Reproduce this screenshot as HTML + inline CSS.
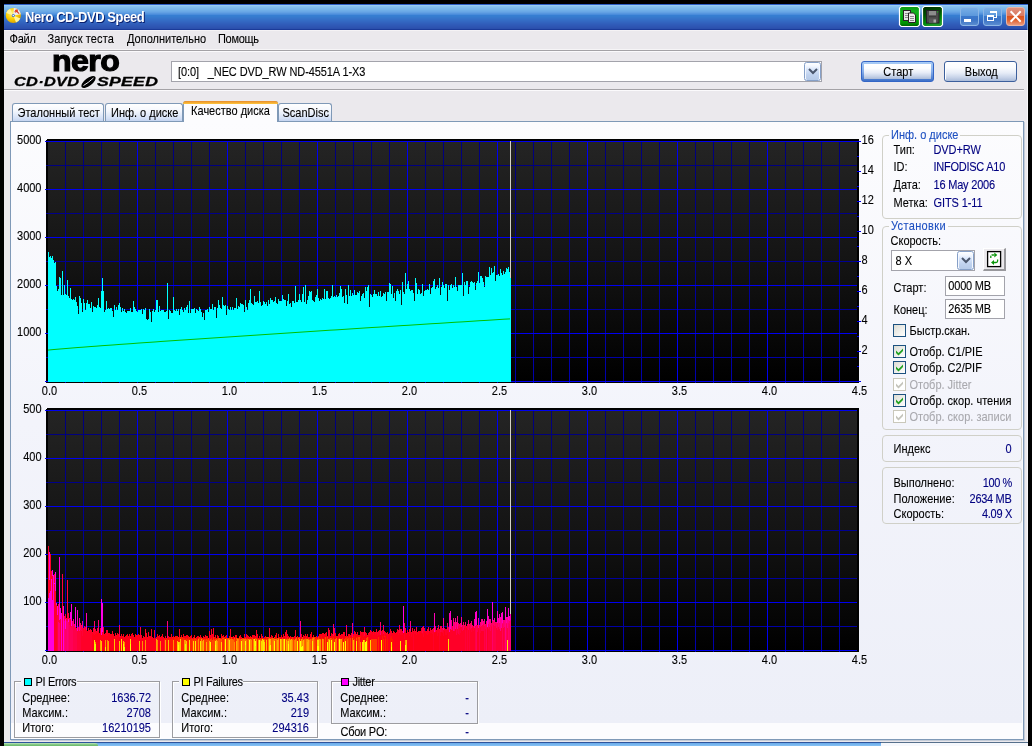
<!DOCTYPE html>
<html lang="ru"><head><meta charset="utf-8"><title>Nero CD-DVD Speed</title>
<style>
html,body{margin:0;padding:0;background:#000;overflow:hidden;}
body{width:1032px;height:746px;overflow:hidden;position:relative;font-family:"Liberation Sans", sans-serif;font-size:11px;}
div,span.t,svg{position:absolute;box-sizing:border-box;}
span.t{white-space:pre;}
.gb{border:1px solid #d0d0c8;border-radius:4px;}
.fr{border:1px solid #9c9ca0;box-shadow:1px 1px 0 #fff, inset 1px 1px 0 #fff;}
.cb{width:13px;height:13px;border:1px solid #1c5180;background:linear-gradient(135deg,#dcdcd4,#fff);}
.cbd{width:13px;height:13px;border:1px solid #cac8bb;background:#fff;}
</style></head><body>
<div id="app" style="left:0;top:0;width:1032px;height:746px;overflow:hidden;will-change:transform;">
<div style="left:4px;top:4px;width:1024px;height:738px;background:#ebe9ed;"></div>
<div style="left:4px;top:4px;width:1024px;height:26px;background:linear-gradient(to bottom,#2c5ec6 0px,#2c5ec6 1px,#98ccf3 1px,#98ccf3 2px,#86c2ef 2px,#86c2ef 3px,#80bdee 3px,#80bdee 4px,#7ab8ec 4px,#7ab8ec 5px,#76b4ea 5px,#76b4ea 6px,#70aee8 6px,#70aee8 7px,#6aa8e6 7px,#6aa8e6 8px,#62a0e3 8px,#62a0e3 9px,#5696df 9px,#5696df 10px,#4a8cdb 10px,#4a8cdb 11px,#367ed2 11px,#367ed2 12px,#367ccf 12px,#367ccf 13px,#3678cd 13px,#3678cd 14px,#3674ca 14px,#3674ca 15px,#3570c8 15px,#3570c8 16px,#346cc5 16px,#346cc5 17px,#3368c2 17px,#3368c2 18px,#3264bf 18px,#3264bf 19px,#3160bc 19px,#3160bc 20px,#305cb9 20px,#305cb9 21px,#2f59b6 21px,#2f59b6 22px,#2e56b3 22px,#2e56b3 23px,#2d53b0 23px,#2d53b0 24px,#2a4fac 24px,#2a4fac 25px,#1b3b99 25px,#1b3b99 26px);"></div>
<div style="left:4px;top:30px;width:1024px;height:1px;background:#f5f3f5;"></div>
<div style="left:1027px;top:5px;width:1px;height:25px;background:rgba(150,200,245,.55);"></div>
<div style="left:1027px;top:31px;width:1px;height:711px;background:#f8f7f9;"></div>
<svg style="left:5px;top:7px" width="17" height="17" viewBox="0 0 17 17">
<defs><radialGradient id="cdg" cx="40%" cy="35%" r="70%"><stop offset="0" stop-color="#fff27a"/><stop offset=".55" stop-color="#fbd000"/><stop offset="1" stop-color="#d89a00"/></radialGradient></defs>
<circle cx="8.3" cy="8.5" r="7.6" fill="url(#cdg)"/>
<path d="M8.3 8.5 L1.2 6 A7.6 7.6 0 0 1 5 1.7 Z" fill="#fff59a"/>
<path d="M8.3 8.5 L11 15.6 A7.6 7.6 0 0 0 15.3 11.5 Z" fill="#fff59a"/>
<path d="M8.3 8.5 L8.8 0.9 A7.6 7.6 0 0 1 15.8 7.2 Z" fill="#ececec"/>
<path d="M10.2 3 L14.2 6.6 M11.8 2.2 L12.6 4.6 M9.6 4.6 l1.6 .6" stroke="#e03a20" stroke-width="1.1" fill="none"/>
<circle cx="8.3" cy="8.5" r="1.5" fill="#3c6cc8"/>
<circle cx="8.3" cy="8.5" r=".8" fill="#fff"/>
</svg>
<span class="t" style="top:10.50px;color:#fff;font-size:13px;line-height:14px;font-weight:bold;letter-spacing:-0.42px;left:25px;transform:scaleY(1.07);transform-origin:0 11.50px;text-shadow:1px 1px 0 #0a1f6e;">Nero CD-DVD Speed</span>
<svg style="left:898px;top:5px" width="23" height="23" viewBox="0 0 23 23">
<defs><linearGradient id="g1" x1="0" y1="0" x2="0" y2="1"><stop offset="0" stop-color="#0a9a14"/><stop offset=".25" stop-color="#10b01c"/><stop offset=".6" stop-color="#00a808"/><stop offset=".85" stop-color="#009000"/><stop offset="1" stop-color="#005c00"/></linearGradient></defs>
<path d="M3.200 1.500h16.600l1.700 1.700v16.600l-1.700 1.700h-16.600l-1.700-1.700v-16.600z" fill="url(#g1)" stroke="#fff" stroke-width="1.200"/>
<rect x="5.500" y="5.500" width="7" height="10" fill="#e4e4e4" stroke="#2a2226" stroke-width="1"/>
<path d="M7 8.500h4M7 10.500h4M7 12.500h4" stroke="#8a8a8a" stroke-width="1"/>
<path d="M10.500 8h5l2 2v7.500h-7z" fill="#ececec" stroke="#2a2226" stroke-width="1"/>
<path d="M12 11.500h4M12 13.500h4M12 15.500h4" stroke="#8a8a8a" stroke-width="1"/>
</svg>
<svg style="left:921px;top:5px" width="23" height="23" viewBox="0 0 23 23">
<defs><linearGradient id="g2" x1="0" y1="0" x2="0.300" y2="1"><stop offset="0" stop-color="#002c00"/><stop offset=".45" stop-color="#005200"/><stop offset=".8" stop-color="#008a08"/><stop offset="1" stop-color="#1c9a28"/></linearGradient></defs>
<path d="M3.200 1.500h16.600l1.700 1.700v16.600l-1.700 1.700h-16.600l-1.700-1.700v-16.600z" fill="url(#g2)" stroke="#fff" stroke-width="1.200"/>
<rect x="5.500" y="5.500" width="12.500" height="12.500" fill="#4a4a4a" stroke="#262226" stroke-width="1"/>
<rect x="8" y="6" width="7" height="5" fill="#8c8c8c"/>
<rect x="8" y="10.500" width="7" height="1" fill="#2c2c2c"/>
<rect x="8" y="13.500" width="7.500" height="4.500" fill="#5a5a5a"/>
<rect x="12.500" y="14.500" width="2.500" height="3" fill="#a8a8a8"/>
<rect x="16" y="6.300" width="1.200" height="1.200" fill="#18b018"/>
</svg>
<div style="left:960px;top:7px;width:19px;height:19px;border-radius:3px;border:1px solid #8cb6e6;background:linear-gradient(to bottom,#78aee6 0,#5c98dc 45%,#3a78cc 46%,#3c74c6 70%,#5a8cd0 100%);"></div>
<div style="left:983px;top:7px;width:19px;height:19px;border-radius:3px;border:1px solid #8cb6e6;background:linear-gradient(to bottom,#78aee6 0,#5c98dc 45%,#3a78cc 46%,#3c74c6 70%,#5a8cd0 100%);"></div>
<div style="left:1006px;top:7px;width:19px;height:19px;border-radius:3px;border:1px solid #eab4a4;background:linear-gradient(to bottom,#e0907c 0,#d97a62 45%,#d9521e 46%,#e0602c 70%,#e89a80 100%);"></div>
<svg style="left:960px;top:7px" width="66" height="19" viewBox="0 0 66 19" shape-rendering="crispEdges">
<rect x="4" y="12" width="7" height="3" fill="#fff"/>
<rect x="30" y="4" width="7" height="2" fill="#fff"/>
<rect x="36" y="4" width="1" height="7" fill="#fff"/>
<rect x="34" y="10" width="3" height="1" fill="#fff"/>
<rect x="27" y="8" width="7" height="2" fill="#fff"/>
<rect x="27" y="8" width="1" height="6" fill="#fff"/>
<rect x="33" y="8" width="1" height="6" fill="#fff"/>
<rect x="27" y="13" width="7" height="1" fill="#fff"/>
</svg>
<svg style="left:1006px;top:7px" width="19" height="19" viewBox="0 0 19 19">
<path d="M5.300 5 L14 14 M14 5 L5.300 14" stroke="#fff" stroke-width="2" stroke-linecap="square"/>
</svg>
<span class="t" style="top:32.19px;color:#000;font-size:11px;line-height:14px;letter-spacing:-0.2px;left:9.5px;transform:scaleY(1.1);transform-origin:0 10.81px;-webkit-text-stroke:0.1px #000;">Файл</span>
<span class="t" style="top:32.19px;color:#000;font-size:11px;line-height:14px;letter-spacing:0.12px;left:47.5px;transform:scaleY(1.1);transform-origin:0 10.81px;-webkit-text-stroke:0.1px #000;">Запуск теста</span>
<span class="t" style="top:32.19px;color:#000;font-size:11px;line-height:14px;left:127px;transform:scaleY(1.1);transform-origin:0 10.81px;-webkit-text-stroke:0.1px #000;">Дополнительно</span>
<span class="t" style="top:32.19px;color:#000;font-size:11px;line-height:14px;letter-spacing:-0.3px;left:218px;transform:scaleY(1.1);transform-origin:0 10.81px;-webkit-text-stroke:0.1px #000;">Помощь</span>
<div style="left:4px;top:49px;width:1020px;height:1px;background:#f6f5f7;"></div>
<div style="left:4px;top:50px;width:1020px;height:1px;background:#a4a2a6;"></div>
<div style="left:4px;top:51px;width:1020px;height:1px;background:#fbfafc;"></div>
<div style="left:4px;top:89px;width:1020px;height:1px;background:#a4a2a6;"></div>
<div style="left:4px;top:90px;width:1020px;height:1px;background:#fbfafc;"></div>
<span class="t" style="left:52px;top:45px;font-size:28px;line-height:32px;font-weight:bold;letter-spacing:-0.5px;color:#000;-webkit-text-stroke:1.1px #000;transform-origin:0 0;transform:scale(1.145,1.05);">nero</span>
<span class="t" style="left:14px;top:75.3px;font-size:12.5px;line-height:14px;font-weight:bold;font-style:italic;letter-spacing:0.2px;color:#000;-webkit-text-stroke:0.3px #000;transform-origin:0 0;transform:scale(1.31,1.02);">CD·DVD</span>
<span class="t" style="left:96.5px;top:75.3px;font-size:12.5px;line-height:14px;font-weight:bold;font-style:italic;letter-spacing:0.2px;color:#000;-webkit-text-stroke:0.3px #000;transform-origin:0 0;transform:scale(1.41,1.02);">SPEED</span>
<svg style="left:80px;top:74px" width="18" height="16" viewBox="0 0 18 16">
<ellipse cx="8.500" cy="8" rx="8.500" ry="3.800" transform="rotate(-38 8.500 8)" fill="#000"/>
<path d="M3.500 11.500 Q8 9 13.500 4" stroke="#ebe9ed" stroke-width="1" fill="none"/>
</svg>
<div style="left:171px;top:61px;width:651px;height:21px;background:#fff;border:1px solid #a3a3ab;"></div>
<span class="t" style="top:65.19px;color:#000;font-size:11px;line-height:14px;letter-spacing:-0.1px;left:178px;transform:scaleY(1.1);transform-origin:0 10.81px;-webkit-text-stroke:0.1px #000;">[0:0]   _NEC DVD_RW ND-4551A 1-X3</span>
<div style="left:804px;top:62px;width:17px;height:19px;border:1px solid #86a0c8;border-radius:2.5px;background:linear-gradient(to bottom,#ffffff 0,#f4f8ff 18%,#d6e4fa 40%,#c0d2ee 70%,#b6cae8 100%);box-shadow:inset 1px 0 0 #f4f8ff, inset -1px 0 0 #f4f8ff;"></div>
<svg style="left:804px;top:62px" width="17" height="19" viewBox="0 0 17 19"><path d="M5.0 7.0 L9.0 11.0 L13.0 7.0" stroke="#4a566c" stroke-width="2" fill="none"/></svg>
<div style="left:861px;top:61px;width:73px;height:21px;border:1px solid #3466c6;border-radius:3px;background:linear-gradient(to bottom,#a8ccf6 0,#86aeea 50%,#3e70c8 100%);"></div>
<div style="left:864px;top:64px;width:67px;height:15px;background:linear-gradient(to bottom,#ffffff 0,#fbfcfe 30%,#e6ecf7 58%,#c6d2e8 82%,#aabbd8 100%);"></div>
<span class="t" style="top:65.19px;color:#000;font-size:11px;line-height:14px;left:798.3px;width:200px;text-align:center;transform:scaleY(1.1);transform-origin:0 10.81px;-webkit-text-stroke:0.1px #000;">Старт</span>
<div style="left:944px;top:61px;width:73px;height:21px;border:1px solid #3c5f9c;border-radius:3px;background:linear-gradient(to bottom,#ffffff 0,#fbfcfe 30%,#e6ecf7 58%,#c6d2e8 82%,#aabbd8 100%);box-shadow:inset 1px 1px 0 #fff;"></div>
<span class="t" style="top:65.19px;color:#000;font-size:11px;line-height:14px;left:881.3px;width:200px;text-align:center;transform:scaleY(1.1);transform-origin:0 10.81px;-webkit-text-stroke:0.1px #000;">Выход</span>
<div style="left:10px;top:121px;width:1014px;height:619px;background:#fcfcfe;border:1px solid #7f99b7;"></div>
<div style="left:11px;top:122px;width:1011px;height:601px;background:linear-gradient(to bottom,#fcfcfe 0,#f3f4fb 50%,#edeff8 100%);"></div>
<div style="left:12px;top:103px;width:92px;height:18px;border:1px solid #7f99b7;border-bottom:none;border-radius:3px 3px 0 0;background:linear-gradient(to bottom,#ffffff 0,#f4f7fd 40%,#d4e0f6 85%,#c4d4f0 100%);"></div>
<span class="t" style="top:105.69px;color:#000;font-size:11px;line-height:14px;left:-41.3px;width:200px;text-align:center;transform:scaleY(1.1);transform-origin:0 10.81px;-webkit-text-stroke:0.1px #000;">Эталонный тест</span>
<div style="left:105px;top:103px;width:78px;height:18px;border:1px solid #7f99b7;border-bottom:none;border-radius:3px 3px 0 0;background:linear-gradient(to bottom,#ffffff 0,#f4f7fd 40%,#d4e0f6 85%,#c4d4f0 100%);"></div>
<span class="t" style="top:105.69px;color:#000;font-size:11px;line-height:14px;left:44.69999999999999px;width:200px;text-align:center;transform:scaleY(1.1);transform-origin:0 10.81px;-webkit-text-stroke:0.1px #000;">Инф. о диске</span>
<div style="left:278px;top:103px;width:54px;height:18px;border:1px solid #7f99b7;border-bottom:none;border-radius:3px 3px 0 0;background:linear-gradient(to bottom,#ffffff 0,#f4f7fd 40%,#d4e0f6 85%,#c4d4f0 100%);"></div>
<span class="t" style="top:105.69px;color:#000;font-size:11px;line-height:14px;left:205.7px;width:200px;text-align:center;transform:scaleY(1.1);transform-origin:0 10.81px;-webkit-text-stroke:0.1px #000;">ScanDisc</span>
<div style="left:183px;top:101px;width:95px;height:21px;border:1px solid #7f99b7;border-bottom:none;border-radius:3px 3px 0 0;background:#fcfcfe;"></div>
<div style="left:183px;top:101px;width:95px;height:3px;border-radius:3px 3px 0 0;background:linear-gradient(to bottom,#e68b2c,#ffc73c);"></div>
<span class="t" style="top:103.69px;color:#000;font-size:11px;line-height:14px;left:130.5px;width:200px;text-align:center;transform:scaleY(1.1);transform-origin:0 10.81px;-webkit-text-stroke:0.1px #000;">Качество диска</span>
<svg style="left:40px;top:135px" width="830" height="256" viewBox="40 135 830 256" shape-rendering="crispEdges"><defs><linearGradient id="cg139" x1="0" y1="0" x2="0" y2="1"><stop offset="0" stop-color="#242424"/><stop offset=".5" stop-color="#141414"/><stop offset="1" stop-color="#000"/></linearGradient></defs><rect x="46" y="139" width="813" height="244" fill="#000"/><rect x="46" y="139" width="1" height="1" fill="#fcfcfe"/><rect x="48" y="141" width="809" height="241" fill="url(#cg139)"/><linearGradient id="cg139m" gradientUnits="userSpaceOnUse" x1="0" y1="141" x2="0" y2="382"><stop offset="0" stop-color="#00007c"/><stop offset="1" stop-color="#0000ac"/></linearGradient><g fill="url(#cg139m)"><rect x="65" y="141" width="1" height="241"/><rect x="83" y="141" width="1" height="241"/><rect x="101" y="141" width="1" height="241"/><rect x="119" y="141" width="1" height="241"/><rect x="155" y="141" width="1" height="241"/><rect x="173" y="141" width="1" height="241"/><rect x="191" y="141" width="1" height="241"/><rect x="209" y="141" width="1" height="241"/><rect x="245" y="141" width="1" height="241"/><rect x="263" y="141" width="1" height="241"/><rect x="281" y="141" width="1" height="241"/><rect x="299" y="141" width="1" height="241"/><rect x="335" y="141" width="1" height="241"/><rect x="353" y="141" width="1" height="241"/><rect x="371" y="141" width="1" height="241"/><rect x="389" y="141" width="1" height="241"/><rect x="425" y="141" width="1" height="241"/><rect x="443" y="141" width="1" height="241"/><rect x="461" y="141" width="1" height="241"/><rect x="479" y="141" width="1" height="241"/><rect x="515" y="141" width="1" height="241"/><rect x="533" y="141" width="1" height="241"/><rect x="551" y="141" width="1" height="241"/><rect x="569" y="141" width="1" height="241"/><rect x="605" y="141" width="1" height="241"/><rect x="623" y="141" width="1" height="241"/><rect x="641" y="141" width="1" height="241"/><rect x="659" y="141" width="1" height="241"/><rect x="695" y="141" width="1" height="241"/><rect x="713" y="141" width="1" height="241"/><rect x="731" y="141" width="1" height="241"/><rect x="749" y="141" width="1" height="241"/><rect x="785" y="141" width="1" height="241"/><rect x="803" y="141" width="1" height="241"/><rect x="821" y="141" width="1" height="241"/><rect x="839" y="141" width="1" height="241"/></g><rect x="46" y="165" width="811" height="1" fill="#000080"/><rect x="46" y="213" width="811" height="1" fill="#00008a"/><rect x="46" y="261" width="811" height="1" fill="#000093"/><rect x="46" y="309" width="811" height="1" fill="#00009d"/><rect x="46" y="357" width="811" height="1" fill="#0000a7"/><path d="M137.5 141v242M227.5 141v242M317.5 141v242M407.5 141v242M497.5 141v242M587.5 141v242M677.5 141v242M767.5 141v242M45 141.5h812M45 189.5h812M45 237.5h812M45 285.5h812M45 333.5h812M45 381.5h812" stroke="#0000f0" stroke-width="1" fill="none"/><path d="M48 382V252h1V257h1V256h1V258h1V256h1V260h1V263h1V262h1V286h1V291h1V289h1V277h1V278h1V295h1V271h1V295h1V285h1V294h1V295h1V280h1V296h1V298h1V288h1V299h1V300h1V299h1V300h1V297h1V302h1V306h1V314h1V296h1V298h1V303h1V312h1V299h1V303h1V310h1V303h1V300h1V304h1V304h1V308h1V302h1V312h1V306h1V307h1V307h1V308h1V305h1V298h1V307h1V308h1V291h1V278h1V291h1V312h1V310h1V301h1V309h1V308h1V309h1V308h1V308h1V311h1V317h1V305h1V310h1V307h1V310h1V305h1V303h1V307h1V312h1V308h1V311h1V309h1V312h1V313h1V311h1V311h1V311h1V308h1V312h1V312h1V301h1V307h1V309h1V311h1V312h1V310h1V310h1V310h1V309h1V314h1V309h1V310h1V308h1V319h1V320h1V319h1V309h1V312h1V322h1V311h1V309h1V312h1V310h1V300h1V300h1V312h1V306h1V311h1V310h1V310h1V310h1V312h1V312h1V311h1V283h1V319h1V310h1V311h1V313h1V313h1V297h1V310h1V311h1V309h1V311h1V309h1V315h1V309h1V307h1V310h1V312h1V308h1V310h1V307h1V305h1V313h1V301h1V313h1V309h1V309h1V309h1V308h1V313h1V309h1V310h1V311h1V307h1V309h1V312h1V317h1V313h1V320h1V310h1V310h1V309h1V312h1V307h1V309h1V309h1V304h1V310h1V307h1V307h1V318h1V308h1V300h1V305h1V308h1V309h1V297h1V305h1V306h1V305h1V315h1V306h1V309h1V310h1V307h1V310h1V307h1V310h1V308h1V308h1V298h1V309h1V306h1V307h1V303h1V304h1V304h1V305h1V312h1V300h1V307h1V310h1V303h1V300h1V289h1V303h1V304h1V305h1V296h1V302h1V302h1V301h1V303h1V291h1V302h1V306h1V305h1V301h1V302h1V304h1V302h1V306h1V300h1V304h1V298h1V300h1V300h1V302h1V301h1V297h1V303h1V304h1V299h1V301h1V301h1V301h1V295h1V299h1V300h1V300h1V306h1V301h1V294h1V304h1V303h1V307h1V301h1V301h1V303h1V286h1V302h1V302h1V300h1V294h1V300h1V302h1V294h1V287h1V302h1V285h1V304h1V300h1V296h1V291h1V292h1V291h1V300h1V301h1V302h1V297h1V295h1V289h1V298h1V301h1V299h1V300h1V298h1V299h1V289h1V299h1V291h1V291h1V298h1V299h1V298h1V296h1V285h1V297h1V296h1V297h1V295h1V297h1V296h1V293h1V286h1V289h1V297h1V296h1V303h1V289h1V295h1V304h1V285h1V296h1V290h1V296h1V293h1V295h1V290h1V295h1V295h1V292h1V293h1V291h1V301h1V296h1V294h1V293h1V298h1V287h1V291h1V287h1V285h1V307h1V294h1V295h1V297h1V294h1V290h1V294h1V294h1V296h1V292h1V296h1V291h1V297h1V296h1V293h1V294h1V292h1V301h1V292h1V292h1V283h1V284h1V294h1V286h1V298h1V293h1V301h1V291h1V289h1V291h1V294h1V290h1V305h1V282h1V292h1V294h1V273h1V289h1V284h1V281h1V289h1V291h1V290h1V290h1V293h1V301h1V278h1V283h1V294h1V289h1V290h1V294h1V293h1V284h1V296h1V291h1V290h1V290h1V289h1V290h1V284h1V294h1V288h1V287h1V281h1V279h1V289h1V287h1V285h1V288h1V278h1V295h1V287h1V282h1V285h1V288h1V284h1V284h1V301h1V285h1V290h1V285h1V284h1V288h1V285h1V287h1V277h1V287h1V291h1V285h1V285h1V285h1V285h1V273h1V296h1V282h1V285h1V281h1V281h1V294h1V287h1V282h1V281h1V282h1V283h1V282h1V290h1V283h1V281h1V272h1V283h1V276h1V276h1V278h1V282h1V287h1V276h1V277h1V277h1V277h1V267h1V275h1V268h1V273h1V272h1V266h1V281h1V275h1V275h1V274h1V276h1V269h1V273h1V275h1V271h1V274h1V272h1V268h1V269h1V267h1V272h1V278h1V382Z" fill="#00ffff"/><rect x="510" y="141" width="1" height="137" fill="#d4d0c8"/><polyline points="48,350.1 54,349.5 60,349.0 66,348.5 72,348.0 78,347.5 84,347.1 90,346.6 96,346.2 102,345.7 108,345.3 114,344.9 120,344.4 126,344.0 132,343.6 138,343.1 144,342.7 150,342.3 156,341.9 162,341.4 168,341.0 174,340.6 180,340.2 186,339.8 192,339.4 198,339.0 204,338.6 210,338.2 216,337.8 222,337.4 228,337.0 234,336.6 240,336.2 246,335.8 252,335.4 258,335.0 264,334.6 270,334.2 276,333.8 282,333.4 288,333.0 294,332.6 300,332.2 306,331.8 312,331.4 318,331.0 324,330.6 330,330.2 336,329.9 342,329.5 348,329.1 354,328.7 360,328.3 366,327.9 372,327.5 378,327.2 384,326.8 390,326.4 396,326.0 402,325.6 408,325.3 414,324.9 420,324.5 426,324.1 432,323.7 438,323.4 444,323.0 450,322.6 456,322.2 462,321.9 468,321.5 474,321.1 480,320.7 486,320.4 492,320.0 498,319.6 504,319.2 510,318.9 510,318.9" fill="none" stroke="#00c000" stroke-width="1" shape-rendering="auto"/><path d="M65.5 382v1M83.5 382v1M101.5 382v1M119.5 382v1M137.5 382v1M155.5 382v1M173.5 382v1M191.5 382v1M209.5 382v1M227.5 382v1M245.5 382v1M263.5 382v1M281.5 382v1M299.5 382v1M317.5 382v1M335.5 382v1M353.5 382v1M371.5 382v1M389.5 382v1M407.5 382v1M425.5 382v1M443.5 382v1M461.5 382v1M479.5 382v1M497.5 382v1M515.5 382v1M533.5 382v1M551.5 382v1M569.5 382v1M587.5 382v1M605.5 382v1M623.5 382v1M641.5 382v1M659.5 382v1M677.5 382v1M695.5 382v1M713.5 382v1M731.5 382v1M749.5 382v1M767.5 382v1M785.5 382v1M803.5 382v1M821.5 382v1M839.5 382v1" stroke="#0000c0" stroke-width="1" fill="none"/><path d="M857 141.5h4M857 156.5h2M857 171.5h4M857 186.5h2M857 201.5h4M857 216.5h2M857 231.5h4M857 246.5h2M857 261.5h4M857 276.5h2M857 291.5h4M857 306.5h2M857 321.5h4M857 336.5h2M857 351.5h4M857 366.5h2M857 381.5h4" stroke="#0000f0" stroke-width="1" fill="none"/></svg>
<span class="t" style="top:133.19px;color:#000;font-size:11px;line-height:14px;right:990.5px;text-align:right;transform:scaleY(1.1);transform-origin:0 10.81px;-webkit-text-stroke:0.1px #000;">5000</span>
<span class="t" style="top:181.19px;color:#000;font-size:11px;line-height:14px;right:990.5px;text-align:right;transform:scaleY(1.1);transform-origin:0 10.81px;-webkit-text-stroke:0.1px #000;">4000</span>
<span class="t" style="top:229.19px;color:#000;font-size:11px;line-height:14px;right:990.5px;text-align:right;transform:scaleY(1.1);transform-origin:0 10.81px;-webkit-text-stroke:0.1px #000;">3000</span>
<span class="t" style="top:277.19px;color:#000;font-size:11px;line-height:14px;right:990.5px;text-align:right;transform:scaleY(1.1);transform-origin:0 10.81px;-webkit-text-stroke:0.1px #000;">2000</span>
<span class="t" style="top:325.19px;color:#000;font-size:11px;line-height:14px;right:990.5px;text-align:right;transform:scaleY(1.1);transform-origin:0 10.81px;-webkit-text-stroke:0.1px #000;">1000</span>
<span class="t" style="top:384.19px;color:#000;font-size:11px;line-height:14px;left:-50.5px;width:200px;text-align:center;transform:scaleY(1.1);transform-origin:0 10.81px;-webkit-text-stroke:0.1px #000;">0.0</span>
<span class="t" style="top:384.19px;color:#000;font-size:11px;line-height:14px;left:39.5px;width:200px;text-align:center;transform:scaleY(1.1);transform-origin:0 10.81px;-webkit-text-stroke:0.1px #000;">0.5</span>
<span class="t" style="top:384.19px;color:#000;font-size:11px;line-height:14px;left:129.5px;width:200px;text-align:center;transform:scaleY(1.1);transform-origin:0 10.81px;-webkit-text-stroke:0.1px #000;">1.0</span>
<span class="t" style="top:384.19px;color:#000;font-size:11px;line-height:14px;left:219.5px;width:200px;text-align:center;transform:scaleY(1.1);transform-origin:0 10.81px;-webkit-text-stroke:0.1px #000;">1.5</span>
<span class="t" style="top:384.19px;color:#000;font-size:11px;line-height:14px;left:309.5px;width:200px;text-align:center;transform:scaleY(1.1);transform-origin:0 10.81px;-webkit-text-stroke:0.1px #000;">2.0</span>
<span class="t" style="top:384.19px;color:#000;font-size:11px;line-height:14px;left:399.5px;width:200px;text-align:center;transform:scaleY(1.1);transform-origin:0 10.81px;-webkit-text-stroke:0.1px #000;">2.5</span>
<span class="t" style="top:384.19px;color:#000;font-size:11px;line-height:14px;left:489.5px;width:200px;text-align:center;transform:scaleY(1.1);transform-origin:0 10.81px;-webkit-text-stroke:0.1px #000;">3.0</span>
<span class="t" style="top:384.19px;color:#000;font-size:11px;line-height:14px;left:579.5px;width:200px;text-align:center;transform:scaleY(1.1);transform-origin:0 10.81px;-webkit-text-stroke:0.1px #000;">3.5</span>
<span class="t" style="top:384.19px;color:#000;font-size:11px;line-height:14px;left:669.5px;width:200px;text-align:center;transform:scaleY(1.1);transform-origin:0 10.81px;-webkit-text-stroke:0.1px #000;">4.0</span>
<span class="t" style="top:384.19px;color:#000;font-size:11px;line-height:14px;left:759.5px;width:200px;text-align:center;transform:scaleY(1.1);transform-origin:0 10.81px;-webkit-text-stroke:0.1px #000;">4.5</span>
<span class="t" style="top:133.19px;color:#000;font-size:11px;line-height:14px;left:861.6px;transform:scaleY(1.1);transform-origin:0 10.81px;-webkit-text-stroke:0.1px #000;">16</span>
<span class="t" style="top:163.19px;color:#000;font-size:11px;line-height:14px;left:861.6px;transform:scaleY(1.1);transform-origin:0 10.81px;-webkit-text-stroke:0.1px #000;">14</span>
<span class="t" style="top:193.19px;color:#000;font-size:11px;line-height:14px;left:861.6px;transform:scaleY(1.1);transform-origin:0 10.81px;-webkit-text-stroke:0.1px #000;">12</span>
<span class="t" style="top:223.19px;color:#000;font-size:11px;line-height:14px;left:861.6px;transform:scaleY(1.1);transform-origin:0 10.81px;-webkit-text-stroke:0.1px #000;">10</span>
<span class="t" style="top:253.19px;color:#000;font-size:11px;line-height:14px;left:861.6px;transform:scaleY(1.1);transform-origin:0 10.81px;-webkit-text-stroke:0.1px #000;">8</span>
<span class="t" style="top:283.19px;color:#000;font-size:11px;line-height:14px;left:861.6px;transform:scaleY(1.1);transform-origin:0 10.81px;-webkit-text-stroke:0.1px #000;">6</span>
<span class="t" style="top:313.19px;color:#000;font-size:11px;line-height:14px;left:861.6px;transform:scaleY(1.1);transform-origin:0 10.81px;-webkit-text-stroke:0.1px #000;">4</span>
<span class="t" style="top:343.19px;color:#000;font-size:11px;line-height:14px;left:861.6px;transform:scaleY(1.1);transform-origin:0 10.81px;-webkit-text-stroke:0.1px #000;">2</span>
<svg style="left:40px;top:404px" width="830" height="256" viewBox="40 404 830 256" shape-rendering="crispEdges"><defs><linearGradient id="cg408" x1="0" y1="0" x2="0" y2="1"><stop offset="0" stop-color="#242424"/><stop offset=".5" stop-color="#141414"/><stop offset="1" stop-color="#000"/></linearGradient></defs><rect x="46" y="408" width="813" height="244" fill="#000"/><rect x="46" y="408" width="1" height="1" fill="#fcfcfe"/><rect x="48" y="410" width="809" height="241" fill="url(#cg408)"/><linearGradient id="cg408m" gradientUnits="userSpaceOnUse" x1="0" y1="410" x2="0" y2="651"><stop offset="0" stop-color="#00007c"/><stop offset="1" stop-color="#0000ac"/></linearGradient><g fill="url(#cg408m)"><rect x="65" y="410" width="1" height="241"/><rect x="83" y="410" width="1" height="241"/><rect x="101" y="410" width="1" height="241"/><rect x="119" y="410" width="1" height="241"/><rect x="155" y="410" width="1" height="241"/><rect x="173" y="410" width="1" height="241"/><rect x="191" y="410" width="1" height="241"/><rect x="209" y="410" width="1" height="241"/><rect x="245" y="410" width="1" height="241"/><rect x="263" y="410" width="1" height="241"/><rect x="281" y="410" width="1" height="241"/><rect x="299" y="410" width="1" height="241"/><rect x="335" y="410" width="1" height="241"/><rect x="353" y="410" width="1" height="241"/><rect x="371" y="410" width="1" height="241"/><rect x="389" y="410" width="1" height="241"/><rect x="425" y="410" width="1" height="241"/><rect x="443" y="410" width="1" height="241"/><rect x="461" y="410" width="1" height="241"/><rect x="479" y="410" width="1" height="241"/><rect x="515" y="410" width="1" height="241"/><rect x="533" y="410" width="1" height="241"/><rect x="551" y="410" width="1" height="241"/><rect x="569" y="410" width="1" height="241"/><rect x="605" y="410" width="1" height="241"/><rect x="623" y="410" width="1" height="241"/><rect x="641" y="410" width="1" height="241"/><rect x="659" y="410" width="1" height="241"/><rect x="695" y="410" width="1" height="241"/><rect x="713" y="410" width="1" height="241"/><rect x="731" y="410" width="1" height="241"/><rect x="749" y="410" width="1" height="241"/><rect x="785" y="410" width="1" height="241"/><rect x="803" y="410" width="1" height="241"/><rect x="821" y="410" width="1" height="241"/><rect x="839" y="410" width="1" height="241"/></g><rect x="46" y="434" width="811" height="1" fill="#000080"/><rect x="46" y="482" width="811" height="1" fill="#00008a"/><rect x="46" y="530" width="811" height="1" fill="#000093"/><rect x="46" y="578" width="811" height="1" fill="#00009d"/><rect x="46" y="626" width="811" height="1" fill="#0000a7"/><path d="M137.5 410v242M227.5 410v242M317.5 410v242M407.5 410v242M497.5 410v242M587.5 410v242M677.5 410v242M767.5 410v242M45 410.5h812M45 458.5h812M45 506.5h812M45 554.5h812M45 602.5h812M45 650.5h812" stroke="#0000f0" stroke-width="1" fill="none"/><path d="M48.5 651v-105M50.5 651v-97M51.5 651v-80M54.5 651v-77M85.5 651v-24M87.5 651v-20M88.5 651v-23M89.5 651v-21M90.5 651v-22M91.5 651v-21M92.5 651v-19M95.5 651v-22M96.5 651v-20M100.5 651v-23M106.5 651v-21M107.5 651v-21M112.5 651v-20M115.5 651v-18M145.5 651v-22M148.5 651v-19M151.5 651v-22M154.5 651v-21M179.5 651v-22M209.5 651v-20M211.5 651v-22M213.5 651v-23M230.5 651v-22M256.5 651v-21M285.5 651v-19M286.5 651v-21M295.5 651v-21M326.5 651v-19M329.5 651v-21M339.5 651v-18M343.5 651v-19M351.5 651v-18M354.5 651v-20M355.5 651v-19M357.5 651v-19M360.5 651v-20M361.5 651v-19M363.5 651v-19M369.5 651v-19M370.5 651v-21M371.5 651v-20M373.5 651v-20M375.5 651v-19M376.5 651v-22M377.5 651v-19M378.5 651v-20M379.5 651v-21M381.5 651v-20M382.5 651v-21M384.5 651v-20M386.5 651v-18M389.5 651v-18M390.5 651v-22M391.5 651v-20M393.5 651v-20M397.5 651v-22M398.5 651v-21M400.5 651v-22M401.5 651v-22M402.5 651v-20M407.5 651v-21M408.5 651v-19M411.5 651v-19M412.5 651v-23M413.5 651v-20M414.5 651v-22M415.5 651v-20M418.5 651v-20M420.5 651v-20M421.5 651v-23M424.5 651v-23M425.5 651v-20M426.5 651v-20M427.5 651v-22M430.5 651v-23M431.5 651v-21M436.5 651v-21M439.5 651v-22M444.5 651v-23M445.5 651v-22" stroke="#ff0028" stroke-width="1" fill="none"/><path d="M49.5 651v-99M52.5 651v-81M53.5 651v-76M55.5 651v-79M56.5 651v-48M57.5 651v-45M59.5 651v-94M60.5 651v-43M61.5 651v-38M63.5 651v-45M70.5 651v-39" stroke="#ff00e0" stroke-width="1" fill="none"/><path d="M58.5 651v-47M62.5 651v-77M64.5 651v-35M65.5 651v-37M66.5 651v-33M67.5 651v-71M68.5 651v-38M69.5 651v-33" stroke="#ff0040" stroke-width="1" fill="none"/><path d="M71.5 651v-47M75.5 651v-44M101.5 651v-52M102.5 651v-48M403.5 651v-45M492.5 651v-49" stroke="#ff00e8" stroke-width="1" fill="none"/><path d="M72.5 651v-30M80.5 651v-28M94.5 651v-30M333.5 651v-27M352.5 651v-28M380.5 651v-29M447.5 651v-28M454.5 651v-29M456.5 651v-29M458.5 651v-28M460.5 651v-28M463.5 651v-29M465.5 651v-29M467.5 651v-27M480.5 651v-29M495.5 651v-29" stroke="#ff0068" stroke-width="1" fill="none"/><path d="M73.5 651v-32M82.5 651v-30M300.5 651v-30M410.5 651v-30M451.5 651v-31M453.5 651v-33M468.5 651v-31M481.5 651v-32M490.5 651v-32" stroke="#ff0088" stroke-width="1" fill="none"/><path d="M74.5 651v-27M119.5 651v-26M346.5 651v-26M383.5 651v-26M404.5 651v-28M435.5 651v-25M438.5 651v-26M459.5 651v-27M470.5 651v-28M472.5 651v-26M479.5 651v-26M485.5 651v-27M491.5 651v-28" stroke="#ff0058" stroke-width="1" fill="none"/><path d="M76.5 651v-23M78.5 651v-24M81.5 651v-26M84.5 651v-25M364.5 651v-24M399.5 651v-26M416.5 651v-24M422.5 651v-24M423.5 651v-25M428.5 651v-24M437.5 651v-23M440.5 651v-25M441.5 651v-25M452.5 651v-25M462.5 651v-26M464.5 651v-26M466.5 651v-25M469.5 651v-27M477.5 651v-26" stroke="#ff0048" stroke-width="1" fill="none"/><path d="M77.5 651v-41M450.5 651v-40M475.5 651v-39M501.5 651v-38M502.5 651v-39" stroke="#ff00c8" stroke-width="1" fill="none"/><path d="M79.5 651v-33M455.5 651v-33M457.5 651v-35M461.5 651v-34M474.5 651v-32M482.5 651v-32M484.5 651v-32M489.5 651v-32M494.5 651v-33M498.5 651v-33" stroke="#ff0098" stroke-width="1" fill="none"/><path d="M83.5 651v-23M93.5 651v-23M97.5 651v-23M103.5 651v-24M140.5 651v-24M269.5 651v-23M328.5 651v-23M334.5 651v-23M405.5 651v-23M409.5 651v-22M432.5 651v-22M433.5 651v-23M442.5 651v-23M446.5 651v-22M448.5 651v-24M473.5 651v-25" stroke="#ff0038" stroke-width="1" fill="none"/><path d="M86.5 651v-38M434.5 651v-38M449.5 651v-38M499.5 651v-37M510.5 651v-37" stroke="#ff00b8" stroke-width="1" fill="none"/><path d="M98.5 651v-31M167.5 651v-30M471.5 651v-30M483.5 651v-30M486.5 651v-30M493.5 651v-31M496.5 651v-29M503.5 651v-31M504.5 651v-31" stroke="#ff0078" stroke-width="1" fill="none"/><path d="M99.5 651v-18M104.5 651v-17M105.5 651v-18M108.5 651v-18M109.5 651v-18M110.5 651v-17M111.5 651v-17M113.5 651v-17M114.5 651v-15M116.5 651v-16M117.5 651v-18M118.5 651v-17M120.5 651v-15M121.5 651v-17M122.5 651v-15M123.5 651v-17M124.5 651v-14M125.5 651v-15M126.5 651v-16M127.5 651v-17M128.5 651v-15M129.5 651v-17M130.5 651v-15M131.5 651v-17M132.5 651v-18M133.5 651v-16M134.5 651v-14M135.5 651v-17M136.5 651v-16M137.5 651v-16M138.5 651v-17M139.5 651v-16M141.5 651v-16M142.5 651v-13M143.5 651v-15M144.5 651v-14M146.5 651v-18M147.5 651v-14M149.5 651v-15M150.5 651v-15M152.5 651v-14M153.5 651v-13M155.5 651v-13M156.5 651v-14M157.5 651v-17M158.5 651v-15M159.5 651v-16M160.5 651v-14M161.5 651v-15M162.5 651v-17M163.5 651v-14M164.5 651v-13M165.5 651v-15M168.5 651v-15M169.5 651v-14M170.5 651v-14M171.5 651v-17M173.5 651v-15M175.5 651v-15M176.5 651v-15M177.5 651v-15M181.5 651v-16M183.5 651v-17M184.5 651v-15M185.5 651v-15M186.5 651v-16M187.5 651v-16M188.5 651v-15M190.5 651v-15M191.5 651v-16M192.5 651v-13M193.5 651v-14M194.5 651v-16M196.5 651v-14M197.5 651v-15M198.5 651v-15M200.5 651v-16M201.5 651v-14M203.5 651v-15M204.5 651v-14M205.5 651v-16M206.5 651v-15M207.5 651v-15M210.5 651v-16M212.5 651v-17M214.5 651v-14M215.5 651v-16M217.5 651v-16M218.5 651v-15M221.5 651v-17M223.5 651v-16M225.5 651v-15M226.5 651v-16M229.5 651v-15M232.5 651v-14M233.5 651v-15M234.5 651v-14M235.5 651v-16M236.5 651v-16M239.5 651v-15M240.5 651v-16M241.5 651v-14M244.5 651v-17M245.5 651v-14M246.5 651v-17M247.5 651v-16M248.5 651v-15M252.5 651v-16M253.5 651v-16M254.5 651v-16M255.5 651v-15M257.5 651v-17M258.5 651v-13M259.5 651v-15M261.5 651v-17M262.5 651v-15M264.5 651v-14M265.5 651v-15M270.5 651v-14M271.5 651v-16M272.5 651v-15M275.5 651v-16M276.5 651v-18M278.5 651v-17M279.5 651v-14M280.5 651v-14M281.5 651v-16M282.5 651v-14M283.5 651v-17M284.5 651v-15M287.5 651v-17M288.5 651v-15M289.5 651v-14M290.5 651v-15M291.5 651v-14M293.5 651v-14M294.5 651v-15M297.5 651v-15M298.5 651v-14M301.5 651v-17M303.5 651v-16M304.5 651v-15M305.5 651v-17M306.5 651v-15M307.5 651v-17M308.5 651v-14M309.5 651v-14M310.5 651v-17M311.5 651v-19M313.5 651v-16M316.5 651v-15M317.5 651v-14M319.5 651v-17M320.5 651v-17M321.5 651v-17M322.5 651v-18M323.5 651v-18M324.5 651v-17M325.5 651v-18M327.5 651v-15M330.5 651v-15M331.5 651v-18M332.5 651v-17M335.5 651v-18M336.5 651v-15M337.5 651v-15M338.5 651v-17M340.5 651v-16M341.5 651v-17M342.5 651v-17M344.5 651v-19M345.5 651v-15M347.5 651v-15M348.5 651v-17M349.5 651v-17M350.5 651v-16M353.5 651v-17M356.5 651v-17M358.5 651v-16M359.5 651v-16M362.5 651v-19M365.5 651v-19M366.5 651v-18M367.5 651v-16M368.5 651v-18M372.5 651v-19M374.5 651v-19M385.5 651v-19M387.5 651v-19M388.5 651v-17M392.5 651v-18M394.5 651v-19M395.5 651v-18M396.5 651v-19M406.5 651v-18M417.5 651v-19M419.5 651v-20M429.5 651v-20" stroke="#ff0018" stroke-width="1" fill="none"/><path d="M166.5 651v-13M172.5 651v-14M174.5 651v-14M182.5 651v-14M216.5 651v-13M220.5 651v-13M222.5 651v-15M238.5 651v-13M250.5 651v-15M251.5 651v-14M260.5 651v-13M312.5 651v-14M318.5 651v-15" stroke="#ff1800" stroke-width="1" fill="none"/><path d="M178.5 651v-14M180.5 651v-14M189.5 651v-14M195.5 651v-13M224.5 651v-14M243.5 651v-13M263.5 651v-13M266.5 651v-14M315.5 651v-14" stroke="#ff2800" stroke-width="1" fill="none"/><path d="M199.5 651v-14M202.5 651v-13M227.5 651v-13M237.5 651v-13M268.5 651v-14M274.5 651v-14M277.5 651v-13M292.5 651v-14M314.5 651v-14" stroke="#ff3800" stroke-width="1" fill="none"/><path d="M208.5 651v-13M219.5 651v-13M228.5 651v-13M231.5 651v-14M242.5 651v-13M267.5 651v-14M296.5 651v-14M299.5 651v-14M302.5 651v-14" stroke="#ff4800" stroke-width="1" fill="none"/><path d="M249.5 651v-14" stroke="#ff1818" stroke-width="1" fill="none"/><path d="M273.5 651v-13" stroke="#ff5800" stroke-width="1" fill="none"/><path d="M443.5 651v-33M478.5 651v-33M488.5 651v-35M500.5 651v-34M506.5 651v-34M507.5 651v-34M509.5 651v-35" stroke="#ff00a8" stroke-width="1" fill="none"/><path d="M476.5 651v-40M487.5 651v-42M497.5 651v-40M505.5 651v-44M508.5 651v-43" stroke="#ff00d8" stroke-width="1" fill="none"/><path d="M48.5 651v-75M49.5 651v-71M50.5 651v-77M51.5 651v-73M52.5 651v-75M56.5 651v-46M81.5 651v-20M83.5 651v-22M84.5 651v-21M85.5 651v-21M86.5 651v-21M87.5 651v-19M88.5 651v-20M89.5 651v-20M90.5 651v-20M91.5 651v-20M93.5 651v-20M94.5 651v-20M98.5 651v-20M100.5 651v-19M102.5 651v-19M387.5 651v-18M390.5 651v-18M396.5 651v-18M402.5 651v-18M404.5 651v-19M409.5 651v-19M410.5 651v-20M411.5 651v-18M416.5 651v-20M418.5 651v-19M422.5 651v-18M423.5 651v-20M425.5 651v-19M427.5 651v-21M428.5 651v-19M432.5 651v-21M433.5 651v-20M434.5 651v-19M437.5 651v-22M438.5 651v-22M439.5 651v-21M440.5 651v-19M442.5 651v-19M443.5 651v-21M445.5 651v-20M446.5 651v-21M447.5 651v-21M448.5 651v-21M449.5 651v-19M450.5 651v-22M451.5 651v-21M452.5 651v-21M453.5 651v-20M454.5 651v-20M455.5 651v-22M463.5 651v-21M466.5 651v-23M474.5 651v-23" stroke="#ff0028" stroke-width="1" fill="none"/><path d="M53.5 651v-66M54.5 651v-68M55.5 651v-65M57.5 651v-37M60.5 651v-36M61.5 651v-36M63.5 651v-33M65.5 651v-32M68.5 651v-32" stroke="#ff00e0" stroke-width="1" fill="none"/><path d="M58.5 651v-35M59.5 651v-31M62.5 651v-35M70.5 651v-32" stroke="#ff0040" stroke-width="1" fill="none"/><path d="M64.5 651v-30M484.5 651v-29M489.5 651v-29M498.5 651v-29M502.5 651v-28M504.5 651v-30" stroke="#ff0078" stroke-width="1" fill="none"/><path d="M66.5 651v-30M67.5 651v-30M492.5 651v-30M493.5 651v-29M494.5 651v-29M496.5 651v-28M499.5 651v-28M503.5 651v-30M506.5 651v-28M509.5 651v-30" stroke="#ff0068" stroke-width="1" fill="none"/><path d="M69.5 651v-26M71.5 651v-25M72.5 651v-27M468.5 651v-26M485.5 651v-26M486.5 651v-28M488.5 651v-27M490.5 651v-26M495.5 651v-28M497.5 651v-28" stroke="#ff0058" stroke-width="1" fill="none"/><path d="M73.5 651v-25M74.5 651v-23M75.5 651v-24M76.5 651v-22M456.5 651v-24M458.5 651v-25M462.5 651v-25M464.5 651v-25M467.5 651v-26M469.5 651v-26M476.5 651v-26M477.5 651v-23M481.5 651v-25M482.5 651v-26M483.5 651v-27M487.5 651v-24M491.5 651v-25" stroke="#ff0048" stroke-width="1" fill="none"/><path d="M77.5 651v-20M78.5 651v-22M79.5 651v-20M80.5 651v-21M82.5 651v-23M441.5 651v-23M457.5 651v-22M459.5 651v-23M460.5 651v-24M461.5 651v-24M465.5 651v-25M470.5 651v-22M471.5 651v-23M472.5 651v-24M473.5 651v-24M475.5 651v-25M478.5 651v-23M479.5 651v-25M480.5 651v-24" stroke="#ff0038" stroke-width="1" fill="none"/><path d="M92.5 651v-18M95.5 651v-17M96.5 651v-19M97.5 651v-18M99.5 651v-17M101.5 651v-16M103.5 651v-16M104.5 651v-16M105.5 651v-16M106.5 651v-15M107.5 651v-15M108.5 651v-16M109.5 651v-16M110.5 651v-15M111.5 651v-15M112.5 651v-17M113.5 651v-15M114.5 651v-14M115.5 651v-13M116.5 651v-13M117.5 651v-16M118.5 651v-14M119.5 651v-14M120.5 651v-13M121.5 651v-14M122.5 651v-14M123.5 651v-14M124.5 651v-13M125.5 651v-14M126.5 651v-15M127.5 651v-15M128.5 651v-13M129.5 651v-15M130.5 651v-14M131.5 651v-14M132.5 651v-14M133.5 651v-13M134.5 651v-13M135.5 651v-14M136.5 651v-14M137.5 651v-13M138.5 651v-14M139.5 651v-12M140.5 651v-12M141.5 651v-12M142.5 651v-12M143.5 651v-13M144.5 651v-12M145.5 651v-15M146.5 651v-14M147.5 651v-12M148.5 651v-13M149.5 651v-13M150.5 651v-12M151.5 651v-12M152.5 651v-13M153.5 651v-12M154.5 651v-14M155.5 651v-12M156.5 651v-13M157.5 651v-12M158.5 651v-12M159.5 651v-12M160.5 651v-12M161.5 651v-13M162.5 651v-12M163.5 651v-13M168.5 651v-14M171.5 651v-13M210.5 651v-14M225.5 651v-14M235.5 651v-14M257.5 651v-14M265.5 651v-14M267.5 651v-13M281.5 651v-14M283.5 651v-14M284.5 651v-14M288.5 651v-14M293.5 651v-13M297.5 651v-14M300.5 651v-14M301.5 651v-13M304.5 651v-14M307.5 651v-15M310.5 651v-15M315.5 651v-13M320.5 651v-13M323.5 651v-14M326.5 651v-15M328.5 651v-15M331.5 651v-15M334.5 651v-16M337.5 651v-14M340.5 651v-15M341.5 651v-16M342.5 651v-16M343.5 651v-15M344.5 651v-16M346.5 651v-15M348.5 651v-14M349.5 651v-16M350.5 651v-14M351.5 651v-15M355.5 651v-16M357.5 651v-17M359.5 651v-15M361.5 651v-17M362.5 651v-16M364.5 651v-15M365.5 651v-16M366.5 651v-14M367.5 651v-15M368.5 651v-15M369.5 651v-15M370.5 651v-17M371.5 651v-17M372.5 651v-18M373.5 651v-16M374.5 651v-16M375.5 651v-16M376.5 651v-17M377.5 651v-15M378.5 651v-16M379.5 651v-16M380.5 651v-16M381.5 651v-17M382.5 651v-16M383.5 651v-17M386.5 651v-16M388.5 651v-16M389.5 651v-17M391.5 651v-16M392.5 651v-15M393.5 651v-17M394.5 651v-18M395.5 651v-17M397.5 651v-18M398.5 651v-16M399.5 651v-18M400.5 651v-16M401.5 651v-16M403.5 651v-18M405.5 651v-19M406.5 651v-17M407.5 651v-17M408.5 651v-18M412.5 651v-17M413.5 651v-19M414.5 651v-17M415.5 651v-17M417.5 651v-18M419.5 651v-19M420.5 651v-19M421.5 651v-18M424.5 651v-19M426.5 651v-17M429.5 651v-18M430.5 651v-18M431.5 651v-18M435.5 651v-19M436.5 651v-20M444.5 651v-20" stroke="#ff0018" stroke-width="1" fill="none"/><path d="M164.5 651v-12M306.5 651v-14" stroke="#ff1818" stroke-width="1" fill="none"/><path d="M165.5 651v-12M166.5 651v-12M167.5 651v-13M169.5 651v-13M170.5 651v-12M172.5 651v-13M173.5 651v-12M174.5 651v-12M175.5 651v-14M176.5 651v-13M177.5 651v-14M179.5 651v-14M188.5 651v-14M189.5 651v-13M204.5 651v-13M206.5 651v-14M215.5 651v-14M217.5 651v-13M230.5 651v-14M244.5 651v-13M254.5 651v-13M279.5 651v-13M291.5 651v-13M311.5 651v-13M317.5 651v-13M319.5 651v-13M321.5 651v-15M324.5 651v-14M332.5 651v-14M333.5 651v-15M335.5 651v-15M336.5 651v-14M338.5 651v-15M345.5 651v-14M353.5 651v-15M354.5 651v-15M360.5 651v-15M363.5 651v-15M385.5 651v-15" stroke="#ff1800" stroke-width="1" fill="none"/><path d="M178.5 651v-13M180.5 651v-12M181.5 651v-14M182.5 651v-13M183.5 651v-13M184.5 651v-13M185.5 651v-12M186.5 651v-13M187.5 651v-12M190.5 651v-12M191.5 651v-13M193.5 651v-12M205.5 651v-12M207.5 651v-12M209.5 651v-12M214.5 651v-12M256.5 651v-13M262.5 651v-13M270.5 651v-13M274.5 651v-13M285.5 651v-13M294.5 651v-12M322.5 651v-13M347.5 651v-14M352.5 651v-14M356.5 651v-14M384.5 651v-15" stroke="#ff2800" stroke-width="1" fill="none"/><path d="M192.5 651v-12M194.5 651v-13M195.5 651v-12M196.5 651v-12M197.5 651v-11M198.5 651v-13M199.5 651v-13M200.5 651v-13M201.5 651v-13M202.5 651v-12M203.5 651v-12M211.5 651v-13M213.5 651v-14M247.5 651v-13M261.5 651v-12M268.5 651v-13M276.5 651v-13M287.5 651v-14M295.5 651v-13M305.5 651v-13M309.5 651v-12M316.5 651v-13M329.5 651v-13M339.5 651v-13" stroke="#ff3800" stroke-width="1" fill="none"/><path d="M208.5 651v-12M212.5 651v-11M216.5 651v-12M233.5 651v-12M239.5 651v-14M240.5 651v-12M245.5 651v-13M259.5 651v-12M260.5 651v-12M266.5 651v-12M271.5 651v-13M277.5 651v-12M282.5 651v-13M299.5 651v-13M303.5 651v-12M308.5 651v-13M313.5 651v-14M318.5 651v-14M325.5 651v-14M327.5 651v-14M358.5 651v-14" stroke="#ff4800" stroke-width="1" fill="none"/><path d="M218.5 651v-13M219.5 651v-12M220.5 651v-12M221.5 651v-12M222.5 651v-13M223.5 651v-13M224.5 651v-12M226.5 651v-13M227.5 651v-12M229.5 651v-13M242.5 651v-12M246.5 651v-12M251.5 651v-12M252.5 651v-13M255.5 651v-13M258.5 651v-12M263.5 651v-12M264.5 651v-12M290.5 651v-12M292.5 651v-12M312.5 651v-13M314.5 651v-13M330.5 651v-13" stroke="#ff5800" stroke-width="1" fill="none"/><path d="M228.5 651v-12M231.5 651v-12M232.5 651v-12M234.5 651v-13M236.5 651v-13M272.5 651v-13M273.5 651v-12M280.5 651v-12M286.5 651v-12M296.5 651v-13M302.5 651v-12" stroke="#ff6800" stroke-width="1" fill="none"/><path d="M237.5 651v-12M238.5 651v-12M241.5 651v-12M243.5 651v-12M249.5 651v-12M269.5 651v-13M275.5 651v-12M278.5 651v-13M289.5 651v-13M298.5 651v-13" stroke="#ff7800" stroke-width="1" fill="none"/><path d="M248.5 651v-12M250.5 651v-12M253.5 651v-12" stroke="#ff8800" stroke-width="1" fill="none"/><path d="M500.5 651v-31M505.5 651v-32M507.5 651v-33M508.5 651v-31M510.5 651v-31" stroke="#ff0088" stroke-width="1" fill="none"/><path d="M501.5 651v-32" stroke="#ff0098" stroke-width="1" fill="none"/><path d="M48.5 651v-53M49.5 651v-58M50.5 651v-60M51.5 651v-72M52.5 651v-51M53.5 651v-64M61.5 651v-32M63.5 651v-32" stroke="#ff00e0" stroke-width="1" fill="none"/><path d="M54.5 651v-67M55.5 651v-60M56.5 651v-43M81.5 651v-17M82.5 651v-15M83.5 651v-16M84.5 651v-16M85.5 651v-15M86.5 651v-14M87.5 651v-18M88.5 651v-15M89.5 651v-16M90.5 651v-18M91.5 651v-14M413.5 651v-18M433.5 651v-19M439.5 651v-19M448.5 651v-20M449.5 651v-18M450.5 651v-19M451.5 651v-20M452.5 651v-20M453.5 651v-17M454.5 651v-19M455.5 651v-21M456.5 651v-16M457.5 651v-18M458.5 651v-17M459.5 651v-16M460.5 651v-18M461.5 651v-21M462.5 651v-20M463.5 651v-20M464.5 651v-23M466.5 651v-21M468.5 651v-21M470.5 651v-21M471.5 651v-19M472.5 651v-23M473.5 651v-20M474.5 651v-20M477.5 651v-19M478.5 651v-21M480.5 651v-18M481.5 651v-20M482.5 651v-20M483.5 651v-20M487.5 651v-23" stroke="#ff0028" stroke-width="1" fill="none"/><path d="M57.5 651v-36M60.5 651v-32M62.5 651v-34" stroke="#ff0040" stroke-width="1" fill="none"/><path d="M58.5 651v-29M59.5 651v-28M64.5 651v-29M67.5 651v-29M510.5 651v-30" stroke="#ff0078" stroke-width="1" fill="none"/><path d="M65.5 651v-22M66.5 651v-25M68.5 651v-29M492.5 651v-27M508.5 651v-28" stroke="#ff0068" stroke-width="1" fill="none"/><path d="M69.5 651v-25M70.5 651v-24M71.5 651v-24M72.5 651v-26M476.5 651v-25M486.5 651v-26M502.5 651v-27M506.5 651v-27M509.5 651v-27" stroke="#ff0058" stroke-width="1" fill="none"/><path d="M73.5 651v-23M74.5 651v-17M75.5 651v-20M76.5 651v-20M475.5 651v-24M479.5 651v-24M484.5 651v-25M493.5 651v-26M494.5 651v-25M495.5 651v-25M504.5 651v-24M507.5 651v-23" stroke="#ff0048" stroke-width="1" fill="none"/><path d="M77.5 651v-19M78.5 651v-21M79.5 651v-17M80.5 651v-19M465.5 651v-22M467.5 651v-22M469.5 651v-23M485.5 651v-22M488.5 651v-22M489.5 651v-24M490.5 651v-20M491.5 651v-24M496.5 651v-23M497.5 651v-21M498.5 651v-24M499.5 651v-22M500.5 651v-20M501.5 651v-23M503.5 651v-23" stroke="#ff0038" stroke-width="1" fill="none"/><path d="M92.5 651v-16M93.5 651v-17M94.5 651v-16M95.5 651v-15M96.5 651v-14M97.5 651v-17M98.5 651v-18M99.5 651v-16M100.5 651v-17M101.5 651v-14M102.5 651v-17M103.5 651v-15M104.5 651v-15M105.5 651v-15M106.5 651v-14M107.5 651v-14M108.5 651v-15M109.5 651v-15M110.5 651v-12M111.5 651v-12M112.5 651v-14M113.5 651v-14M114.5 651v-12M115.5 651v-12M116.5 651v-12M117.5 651v-12M118.5 651v-13M119.5 651v-12M120.5 651v-12M121.5 651v-12M122.5 651v-12M123.5 651v-12M124.5 651v-12M125.5 651v-12M126.5 651v-12M127.5 651v-13M128.5 651v-12M129.5 651v-13M130.5 651v-13M131.5 651v-13M132.5 651v-12M133.5 651v-12M134.5 651v-12M135.5 651v-12M136.5 651v-12M137.5 651v-12M138.5 651v-12M139.5 651v-11M140.5 651v-11M141.5 651v-11M142.5 651v-11M143.5 651v-12M144.5 651v-11M145.5 651v-12M146.5 651v-12M147.5 651v-11M148.5 651v-12M149.5 651v-12M150.5 651v-11M151.5 651v-11M152.5 651v-12M153.5 651v-11M154.5 651v-13M155.5 651v-11M156.5 651v-12M157.5 651v-11M158.5 651v-11M159.5 651v-11M160.5 651v-11M161.5 651v-12M162.5 651v-11M163.5 651v-12M337.5 651v-13M343.5 651v-14M351.5 651v-14M355.5 651v-15M360.5 651v-13M361.5 651v-14M363.5 651v-14M365.5 651v-14M369.5 651v-14M370.5 651v-14M377.5 651v-14M379.5 651v-15M380.5 651v-14M381.5 651v-15M384.5 651v-14M386.5 651v-14M388.5 651v-15M389.5 651v-15M393.5 651v-13M394.5 651v-16M395.5 651v-15M396.5 651v-17M397.5 651v-15M398.5 651v-15M399.5 651v-13M400.5 651v-15M401.5 651v-15M402.5 651v-16M403.5 651v-13M404.5 651v-12M405.5 651v-14M406.5 651v-16M407.5 651v-16M408.5 651v-15M409.5 651v-15M410.5 651v-17M411.5 651v-14M412.5 651v-14M414.5 651v-16M415.5 651v-16M416.5 651v-16M417.5 651v-13M418.5 651v-17M419.5 651v-17M420.5 651v-17M421.5 651v-14M422.5 651v-17M423.5 651v-14M424.5 651v-15M425.5 651v-18M426.5 651v-16M427.5 651v-16M428.5 651v-17M429.5 651v-17M430.5 651v-15M431.5 651v-14M432.5 651v-17M434.5 651v-18M435.5 651v-15M436.5 651v-19M437.5 651v-15M438.5 651v-18M440.5 651v-15M441.5 651v-19M442.5 651v-18M443.5 651v-15M444.5 651v-15M445.5 651v-16M446.5 651v-16M447.5 651v-18" stroke="#ff0018" stroke-width="1" fill="none"/><path d="M164.5 651v-11" stroke="#ff1818" stroke-width="1" fill="none"/><path d="M165.5 651v-11M166.5 651v-11M167.5 651v-12M168.5 651v-12M169.5 651v-12M170.5 651v-11M171.5 651v-12M172.5 651v-12M173.5 651v-11M174.5 651v-11M175.5 651v-12M176.5 651v-12M177.5 651v-12M257.5 651v-13M321.5 651v-14M324.5 651v-13M326.5 651v-14M353.5 651v-14M357.5 651v-15M362.5 651v-13M364.5 651v-13M368.5 651v-14M382.5 651v-15M387.5 651v-12M390.5 651v-13M391.5 651v-15M392.5 651v-12" stroke="#ff1800" stroke-width="1" fill="none"/><path d="M178.5 651v-12M179.5 651v-12M180.5 651v-11M181.5 651v-12M182.5 651v-12M183.5 651v-12M184.5 651v-12M185.5 651v-11M186.5 651v-12M187.5 651v-11M188.5 651v-13M189.5 651v-12M190.5 651v-11M191.5 651v-12M199.5 651v-12M200.5 651v-12M222.5 651v-12M223.5 651v-12M235.5 651v-12M265.5 651v-12M267.5 651v-12M279.5 651v-12M297.5 651v-12M300.5 651v-12M316.5 651v-12M346.5 651v-14M349.5 651v-15M378.5 651v-14M383.5 651v-12M385.5 651v-12" stroke="#ff2800" stroke-width="1" fill="none"/><path d="M192.5 651v-11M193.5 651v-11M194.5 651v-12M195.5 651v-11M196.5 651v-11M197.5 651v-10M198.5 651v-12M201.5 651v-12M202.5 651v-11M203.5 651v-11M204.5 651v-12M205.5 651v-11M211.5 651v-12M226.5 651v-12M252.5 651v-12M298.5 651v-12M299.5 651v-12M315.5 651v-12M327.5 651v-13M333.5 651v-13M334.5 651v-12M342.5 651v-13M345.5 651v-13M348.5 651v-13M358.5 651v-12M371.5 651v-12M372.5 651v-12M373.5 651v-12M374.5 651v-12M375.5 651v-12M376.5 651v-12" stroke="#ff3800" stroke-width="1" fill="none"/><path d="M206.5 651v-12M207.5 651v-11M208.5 651v-11M209.5 651v-11M210.5 651v-12M212.5 651v-10M213.5 651v-12M214.5 651v-11M215.5 651v-12M216.5 651v-11M217.5 651v-12M220.5 651v-11M225.5 651v-12M234.5 651v-12M236.5 651v-12M239.5 651v-12M247.5 651v-12M255.5 651v-12M275.5 651v-11M285.5 651v-12M293.5 651v-12M311.5 651v-12M314.5 651v-12M325.5 651v-12M330.5 651v-12M331.5 651v-13M332.5 651v-12M344.5 651v-12M350.5 651v-13M354.5 651v-12M359.5 651v-14M366.5 651v-13M367.5 651v-14" stroke="#ff4800" stroke-width="1" fill="none"/><path d="M218.5 651v-12M219.5 651v-11M221.5 651v-11M224.5 651v-11M227.5 651v-11M240.5 651v-11M241.5 651v-11M249.5 651v-11M271.5 651v-12M287.5 651v-12M305.5 651v-12M338.5 651v-12M347.5 651v-12M356.5 651v-13" stroke="#ff5800" stroke-width="1" fill="none"/><path d="M228.5 651v-11M229.5 651v-12M230.5 651v-12M231.5 651v-11M232.5 651v-11M233.5 651v-11M248.5 651v-11M261.5 651v-11M272.5 651v-12M282.5 651v-12M296.5 651v-12M302.5 651v-11M304.5 651v-12M308.5 651v-12M310.5 651v-12M317.5 651v-12M336.5 651v-13M352.5 651v-13" stroke="#ff6800" stroke-width="1" fill="none"/><path d="M237.5 651v-11M238.5 651v-11M242.5 651v-11M243.5 651v-11M244.5 651v-12M245.5 651v-12M246.5 651v-11M260.5 651v-11M264.5 651v-11M268.5 651v-12M276.5 651v-12M289.5 651v-12M294.5 651v-11M309.5 651v-11M313.5 651v-13M318.5 651v-12M320.5 651v-12M323.5 651v-12M329.5 651v-12M335.5 651v-12" stroke="#ff7800" stroke-width="1" fill="none"/><path d="M250.5 651v-11M251.5 651v-11M253.5 651v-11M254.5 651v-12M256.5 651v-12M259.5 651v-11M273.5 651v-11M274.5 651v-12M288.5 651v-12M292.5 651v-11M295.5 651v-12M306.5 651v-12M312.5 651v-12M319.5 651v-12M328.5 651v-12M339.5 651v-12" stroke="#ff8800" stroke-width="1" fill="none"/><path d="M258.5 651v-11M262.5 651v-12M278.5 651v-12M301.5 651v-12M307.5 651v-12M322.5 651v-12M340.5 651v-12M341.5 651v-12" stroke="#ff9800" stroke-width="1" fill="none"/><path d="M263.5 651v-11" stroke="#ffe800" stroke-width="1" fill="none"/><path d="M266.5 651v-11M290.5 651v-11" stroke="#ffb800" stroke-width="1" fill="none"/><path d="M269.5 651v-12M270.5 651v-12M277.5 651v-11M280.5 651v-11M281.5 651v-12M283.5 651v-12M284.5 651v-12M286.5 651v-11M291.5 651v-12" stroke="#ffa800" stroke-width="1" fill="none"/><path d="M303.5 651v-11" stroke="#ffd800" stroke-width="1" fill="none"/><path d="M505.5 651v-30" stroke="#ff0088" stroke-width="1" fill="none"/><path d="M94.5 651v-11M121.5 651v-12M130.5 651v-12M178.5 651v-9M189.5 651v-11" stroke="#ffe000" stroke-width="1" fill="none"/><path d="M95.5 651v-9M105.5 651v-11M142.5 651v-10M145.5 651v-11M160.5 651v-10M173.5 651v-11M198.5 651v-12M201.5 651v-12M202.5 651v-10M217.5 651v-10M228.5 651v-12M234.5 651v-9M237.5 651v-12M287.5 651v-10M289.5 651v-12M302.5 651v-10M320.5 651v-11M360.5 651v-9M405.5 651v-11" stroke="#ff9000" stroke-width="1" fill="none"/><path d="M100.5 651v-11M108.5 651v-10M156.5 651v-12M165.5 651v-11M184.5 651v-11M185.5 651v-11" stroke="#ffa000" stroke-width="1" fill="none"/><path d="M101.5 651v-10M114.5 651v-12M119.5 651v-10M123.5 651v-10M139.5 651v-10M168.5 651v-11M177.5 651v-10M179.5 651v-9M180.5 651v-12M186.5 651v-10" stroke="#ffc000" stroke-width="1" fill="none"/><path d="M107.5 651v-11M124.5 651v-9M157.5 651v-11" stroke="#ff8800" stroke-width="1" fill="none"/><path d="M193.5 651v-10M221.5 651v-9M229.5 651v-11M261.5 651v-10M262.5 651v-12M264.5 651v-9M269.5 651v-11M280.5 651v-12M288.5 651v-10M317.5 651v-11M318.5 651v-11M370.5 651v-11M448.5 651v-12" stroke="#ffd800" stroke-width="1" fill="none"/><path d="M195.5 651v-10M200.5 651v-10M215.5 651v-10M254.5 651v-12M312.5 651v-10M329.5 651v-11M356.5 651v-10M362.5 651v-9M363.5 651v-11M391.5 651v-9M400.5 651v-10M507.5 651v-11" stroke="#ffe800" stroke-width="1" fill="none"/><path d="M203.5 651v-11M206.5 651v-9M209.5 651v-10M216.5 651v-11M236.5 651v-10M270.5 651v-10M299.5 651v-12M301.5 651v-10M303.5 651v-11M307.5 651v-9M308.5 651v-11M353.5 651v-11M364.5 651v-11M406.5 651v-11" stroke="#ffb000" stroke-width="1" fill="none"/><path d="M210.5 651v-9M225.5 651v-12M241.5 651v-10M245.5 651v-10M249.5 651v-11M255.5 651v-10M259.5 651v-11M274.5 651v-10M284.5 651v-12M297.5 651v-10M300.5 651v-10M327.5 651v-9M331.5 651v-11M334.5 651v-9M339.5 651v-12M343.5 651v-9M345.5 651v-10M365.5 651v-9M366.5 651v-10M381.5 651v-11" stroke="#ffff00" stroke-width="1" fill="none"/><path d="M94.5 651v-4M95.5 651v-7M105.5 651v-4M124.5 651v-4M185.5 651v-7M189.5 651v-4M245.5 651v-6M255.5 651v-5M269.5 651v-5" stroke="#e0ff00" stroke-width="1" fill="none"/><path d="M123.5 651v-7M130.5 651v-7M178.5 651v-6M215.5 651v-6M225.5 651v-6M270.5 651v-6M288.5 651v-7M301.5 651v-4M302.5 651v-5M317.5 651v-5M318.5 651v-5M339.5 651v-5M345.5 651v-4M381.5 651v-4M391.5 651v-4M405.5 651v-6" stroke="#ffff00" stroke-width="1" fill="none"/><rect x="510" y="410" width="1" height="204" fill="#d4d0c8"/><path d="M65.5 651v1M83.5 651v1M101.5 651v1M119.5 651v1M137.5 651v1M155.5 651v1M173.5 651v1M191.5 651v1M209.5 651v1M227.5 651v1M245.5 651v1M263.5 651v1M281.5 651v1M299.5 651v1M317.5 651v1M335.5 651v1M353.5 651v1M371.5 651v1M389.5 651v1M407.5 651v1M425.5 651v1M443.5 651v1M461.5 651v1M479.5 651v1M497.5 651v1M515.5 651v1M533.5 651v1M551.5 651v1M569.5 651v1M587.5 651v1M605.5 651v1M623.5 651v1M641.5 651v1M659.5 651v1M677.5 651v1M695.5 651v1M713.5 651v1M731.5 651v1M749.5 651v1M767.5 651v1M785.5 651v1M803.5 651v1M821.5 651v1M839.5 651v1" stroke="#0000c0" stroke-width="1" fill="none"/></svg>
<span class="t" style="top:402.19px;color:#000;font-size:11px;line-height:14px;right:990.5px;text-align:right;transform:scaleY(1.1);transform-origin:0 10.81px;-webkit-text-stroke:0.1px #000;">500</span>
<span class="t" style="top:450.19px;color:#000;font-size:11px;line-height:14px;right:990.5px;text-align:right;transform:scaleY(1.1);transform-origin:0 10.81px;-webkit-text-stroke:0.1px #000;">400</span>
<span class="t" style="top:498.19px;color:#000;font-size:11px;line-height:14px;right:990.5px;text-align:right;transform:scaleY(1.1);transform-origin:0 10.81px;-webkit-text-stroke:0.1px #000;">300</span>
<span class="t" style="top:546.19px;color:#000;font-size:11px;line-height:14px;right:990.5px;text-align:right;transform:scaleY(1.1);transform-origin:0 10.81px;-webkit-text-stroke:0.1px #000;">200</span>
<span class="t" style="top:594.19px;color:#000;font-size:11px;line-height:14px;right:990.5px;text-align:right;transform:scaleY(1.1);transform-origin:0 10.81px;-webkit-text-stroke:0.1px #000;">100</span>
<span class="t" style="top:653.19px;color:#000;font-size:11px;line-height:14px;left:-50.5px;width:200px;text-align:center;transform:scaleY(1.1);transform-origin:0 10.81px;-webkit-text-stroke:0.1px #000;">0.0</span>
<span class="t" style="top:653.19px;color:#000;font-size:11px;line-height:14px;left:39.5px;width:200px;text-align:center;transform:scaleY(1.1);transform-origin:0 10.81px;-webkit-text-stroke:0.1px #000;">0.5</span>
<span class="t" style="top:653.19px;color:#000;font-size:11px;line-height:14px;left:129.5px;width:200px;text-align:center;transform:scaleY(1.1);transform-origin:0 10.81px;-webkit-text-stroke:0.1px #000;">1.0</span>
<span class="t" style="top:653.19px;color:#000;font-size:11px;line-height:14px;left:219.5px;width:200px;text-align:center;transform:scaleY(1.1);transform-origin:0 10.81px;-webkit-text-stroke:0.1px #000;">1.5</span>
<span class="t" style="top:653.19px;color:#000;font-size:11px;line-height:14px;left:309.5px;width:200px;text-align:center;transform:scaleY(1.1);transform-origin:0 10.81px;-webkit-text-stroke:0.1px #000;">2.0</span>
<span class="t" style="top:653.19px;color:#000;font-size:11px;line-height:14px;left:399.5px;width:200px;text-align:center;transform:scaleY(1.1);transform-origin:0 10.81px;-webkit-text-stroke:0.1px #000;">2.5</span>
<span class="t" style="top:653.19px;color:#000;font-size:11px;line-height:14px;left:489.5px;width:200px;text-align:center;transform:scaleY(1.1);transform-origin:0 10.81px;-webkit-text-stroke:0.1px #000;">3.0</span>
<span class="t" style="top:653.19px;color:#000;font-size:11px;line-height:14px;left:579.5px;width:200px;text-align:center;transform:scaleY(1.1);transform-origin:0 10.81px;-webkit-text-stroke:0.1px #000;">3.5</span>
<span class="t" style="top:653.19px;color:#000;font-size:11px;line-height:14px;left:669.5px;width:200px;text-align:center;transform:scaleY(1.1);transform-origin:0 10.81px;-webkit-text-stroke:0.1px #000;">4.0</span>
<span class="t" style="top:653.19px;color:#000;font-size:11px;line-height:14px;left:759.5px;width:200px;text-align:center;transform:scaleY(1.1);transform-origin:0 10.81px;-webkit-text-stroke:0.1px #000;">4.5</span>
<div class="gb" style="left:882px;top:135px;width:140px;height:84px;"></div>
<div style="left:889px;top:133px;width:71px;height:5px;background:#fafafe;"></div>
<span class="t" style="top:128.19px;color:#1e50c0;font-size:11px;line-height:14px;left:891px;transform:scaleY(1.1);transform-origin:0 10.81px;-webkit-text-stroke:0.1px #1e50c0;">Инф. о диске</span>
<span class="t" style="top:143.19px;color:#000;font-size:11px;line-height:14px;left:893.5px;transform:scaleY(1.1);transform-origin:0 10.81px;-webkit-text-stroke:0.1px #000;">Тип:</span>
<span class="t" style="top:143.19px;color:#000080;font-size:11px;line-height:14px;letter-spacing:-0.1px;left:933.5px;transform:scaleY(1.1);transform-origin:0 10.81px;-webkit-text-stroke:0.1px #000080;">DVD+RW</span>
<span class="t" style="top:160.19px;color:#000;font-size:11px;line-height:14px;left:893.5px;transform:scaleY(1.1);transform-origin:0 10.81px;-webkit-text-stroke:0.1px #000;">ID:</span>
<span class="t" style="top:160.19px;color:#000080;font-size:11px;line-height:14px;letter-spacing:-0.25px;left:933.5px;transform:scaleY(1.1);transform-origin:0 10.81px;-webkit-text-stroke:0.1px #000080;">INFODISC A10</span>
<span class="t" style="top:177.69px;color:#000;font-size:11px;line-height:14px;left:893.5px;transform:scaleY(1.1);transform-origin:0 10.81px;-webkit-text-stroke:0.1px #000;">Дата:</span>
<span class="t" style="top:177.69px;color:#000080;font-size:11px;line-height:14px;letter-spacing:-0.2px;left:933.5px;transform:scaleY(1.1);transform-origin:0 10.81px;-webkit-text-stroke:0.1px #000080;">16 May 2006</span>
<span class="t" style="top:195.69px;color:#000;font-size:11px;line-height:14px;left:893.5px;transform:scaleY(1.1);transform-origin:0 10.81px;-webkit-text-stroke:0.1px #000;">Метка:</span>
<span class="t" style="top:195.69px;color:#000080;font-size:11px;line-height:14px;letter-spacing:-0.1px;left:933.5px;transform:scaleY(1.1);transform-origin:0 10.81px;-webkit-text-stroke:0.1px #000080;">GITS 1-11</span>
<div class="gb" style="left:882px;top:226px;width:140px;height:204px;"></div>
<div style="left:889px;top:224px;width:59px;height:5px;background:#fafafe;"></div>
<span class="t" style="top:219.19px;color:#1e50c0;font-size:11px;line-height:14px;letter-spacing:0.35px;left:891px;transform:scaleY(1.1);transform-origin:0 10.81px;-webkit-text-stroke:0.1px #1e50c0;">Установки</span>
<span class="t" style="top:234.19px;color:#000;font-size:11px;line-height:14px;left:890.5px;transform:scaleY(1.1);transform-origin:0 10.81px;-webkit-text-stroke:0.1px #000;">Скорость:</span>
<div style="left:891px;top:250px;width:84px;height:21px;background:#fff;border:1px solid #a3a3ab;"></div>
<span class="t" style="top:253.69px;color:#000;font-size:11px;line-height:14px;left:895.5px;transform:scaleY(1.1);transform-origin:0 10.81px;-webkit-text-stroke:0.1px #000;">8 X</span>
<div style="left:957px;top:251px;width:17px;height:19px;border:1px solid #86a0c8;border-radius:2.5px;background:linear-gradient(to bottom,#ffffff 0,#f4f8ff 18%,#d6e4fa 40%,#c0d2ee 70%,#b6cae8 100%);box-shadow:inset 1px 0 0 #f4f8ff, inset -1px 0 0 #f4f8ff;"></div>
<svg style="left:957px;top:251px" width="17" height="19" viewBox="0 0 17 19"><path d="M5.0 7.0 L9.0 11.0 L13.0 7.0" stroke="#4a566c" stroke-width="2" fill="none"/></svg>
<div style="left:983px;top:248px;width:23px;height:23px;background:#ebe9ed;border-style:solid;border-width:1px 2px 2px 1px;border-color:#fff #98989c #98989c #fff;"></div>
<svg style="left:986px;top:250px" width="17" height="18" viewBox="0 0 17 18">
<rect x="1.600" y="1.600" width="13" height="15" fill="#fff" stroke="#000" stroke-width="1.300"/>
<path d="M4.800 8 V6.500 Q4.800 5 6.500 5 H9" stroke="#0a960a" stroke-width="1.300" fill="none" stroke-dasharray="2.200 0.800"/>
<path d="M8.300 2.600 L11.300 5 L8.300 7.400 Z" fill="#0a960a"/>
<path d="M11.600 9.500 V11 Q11.600 12.500 10 12.500 H7.500" stroke="#0a960a" stroke-width="1.300" fill="none"/>
<path d="M8 10 L5 12.500 L8 15 Z" fill="#0a960a"/>
</svg>
<span class="t" style="top:281.19px;color:#000;font-size:11px;line-height:14px;left:893.5px;transform:scaleY(1.1);transform-origin:0 10.81px;-webkit-text-stroke:0.1px #000;">Старт:</span>
<div style="left:945px;top:276px;width:60px;height:20px;background:#fff;border:1px solid #a3a3ab;"></div>
<span class="t" style="top:278.69px;color:#000;font-size:11px;line-height:14px;letter-spacing:-0.2px;left:948.3px;transform:scaleY(1.1);transform-origin:0 10.81px;-webkit-text-stroke:0.1px #000;">0000 MB</span>
<span class="t" style="top:303.19px;color:#000;font-size:11px;line-height:14px;left:893.5px;transform:scaleY(1.1);transform-origin:0 10.81px;-webkit-text-stroke:0.1px #000;">Конец:</span>
<div style="left:945px;top:299px;width:60px;height:20px;background:#fff;border:1px solid #a3a3ab;"></div>
<span class="t" style="top:301.69px;color:#000;font-size:11px;line-height:14px;letter-spacing:-0.2px;left:948.3px;transform:scaleY(1.1);transform-origin:0 10.81px;-webkit-text-stroke:0.1px #000;">2635 MB</span>
<div class="cb" style="left:893px;top:324px;"></div>
<span class="t" style="top:324.19px;color:#000;font-size:11px;line-height:14px;left:909.5px;transform:scaleY(1.1);transform-origin:0 10.81px;-webkit-text-stroke:0.1px #000;">Быстр.скан.</span>
<div class="cb" style="left:893px;top:345px;"></div>
<svg style="left:893px;top:345px" width="13" height="13" viewBox="0 0 13 13"><path d="M3 5.500 L5.500 8 L10 3.500 V6 L5.500 10.500 L3 8 Z" fill="#21a121"/></svg>
<span class="t" style="top:345.19px;color:#000;font-size:11px;line-height:14px;left:909.5px;transform:scaleY(1.1);transform-origin:0 10.81px;-webkit-text-stroke:0.1px #000;">Отобр. C1/PIE</span>
<div class="cb" style="left:893px;top:361px;"></div>
<svg style="left:893px;top:361px" width="13" height="13" viewBox="0 0 13 13"><path d="M3 5.500 L5.500 8 L10 3.500 V6 L5.500 10.500 L3 8 Z" fill="#21a121"/></svg>
<span class="t" style="top:361.19px;color:#000;font-size:11px;line-height:14px;left:909.5px;transform:scaleY(1.1);transform-origin:0 10.81px;-webkit-text-stroke:0.1px #000;">Отобр. C2/PIF</span>
<div class="cbd" style="left:893px;top:378px;"></div>
<svg style="left:893px;top:378px" width="13" height="13" viewBox="0 0 13 13"><path d="M3 5.500 L5.500 8 L10 3.500 V6 L5.500 10.500 L3 8 Z" fill="#c4c4bc"/></svg>
<span class="t" style="top:378.19px;color:#a9a9ae;font-size:11px;line-height:14px;left:909.5px;transform:scaleY(1.1);transform-origin:0 10.81px;-webkit-text-stroke:0.1px #a9a9ae;">Отобр. Jitter</span>
<div class="cb" style="left:893px;top:394px;"></div>
<svg style="left:893px;top:394px" width="13" height="13" viewBox="0 0 13 13"><path d="M3 5.500 L5.500 8 L10 3.500 V6 L5.500 10.500 L3 8 Z" fill="#21a121"/></svg>
<span class="t" style="top:394.19px;color:#000;font-size:11px;line-height:14px;left:909.5px;transform:scaleY(1.1);transform-origin:0 10.81px;-webkit-text-stroke:0.1px #000;">Отобр. скор. чтения</span>
<div class="cbd" style="left:893px;top:410px;"></div>
<svg style="left:893px;top:410px" width="13" height="13" viewBox="0 0 13 13"><path d="M3 5.500 L5.500 8 L10 3.500 V6 L5.500 10.500 L3 8 Z" fill="#c4c4bc"/></svg>
<span class="t" style="top:410.19px;color:#a9a9ae;font-size:11px;line-height:14px;left:909.5px;transform:scaleY(1.1);transform-origin:0 10.81px;-webkit-text-stroke:0.1px #a9a9ae;">Отобр. скор. записи</span>
<div class="gb" style="left:882px;top:435px;width:140px;height:27px;"></div>
<span class="t" style="top:442.19px;color:#000;font-size:11px;line-height:14px;left:893.5px;transform:scaleY(1.1);transform-origin:0 10.81px;-webkit-text-stroke:0.1px #000;">Индекс</span>
<span class="t" style="top:442.19px;color:#000080;font-size:11px;line-height:14px;right:20.5px;text-align:right;transform:scaleY(1.1);transform-origin:0 10.81px;-webkit-text-stroke:0.1px #000080;">0</span>
<div class="gb" style="left:882px;top:467px;width:140px;height:57px;"></div>
<span class="t" style="top:475.69px;color:#000;font-size:11px;line-height:14px;left:893.5px;transform:scaleY(1.1);transform-origin:0 10.81px;-webkit-text-stroke:0.1px #000;">Выполнено:</span>
<span class="t" style="top:475.69px;color:#000080;font-size:11px;line-height:14px;letter-spacing:-0.4px;right:20px;text-align:right;transform:scaleY(1.1);transform-origin:0 10.81px;-webkit-text-stroke:0.1px #000080;">100 %</span>
<span class="t" style="top:491.69px;color:#000;font-size:11px;line-height:14px;left:893.5px;transform:scaleY(1.1);transform-origin:0 10.81px;-webkit-text-stroke:0.1px #000;">Положение:</span>
<span class="t" style="top:491.69px;color:#000080;font-size:11px;line-height:14px;letter-spacing:-0.3px;right:20.5px;text-align:right;transform:scaleY(1.1);transform-origin:0 10.81px;-webkit-text-stroke:0.1px #000080;">2634 MB</span>
<span class="t" style="top:507.19px;color:#000;font-size:11px;line-height:14px;left:893.5px;transform:scaleY(1.1);transform-origin:0 10.81px;-webkit-text-stroke:0.1px #000;">Скорость:</span>
<span class="t" style="top:507.19px;color:#000080;font-size:11px;line-height:14px;letter-spacing:-0.3px;right:20px;text-align:right;transform:scaleY(1.1);transform-origin:0 10.81px;-webkit-text-stroke:0.1px #000080;">4.09 X</span>
<div class="fr" style="left:14px;top:681px;width:146px;height:57px;"></div>
<div style="left:21px;top:680px;width:56px;height:5px;background:#eef0f9;"></div>
<div style="left:24px;top:678px;width:8px;height:8px;background:#00ffff;border:1px solid #000;"></div>
<span class="t" style="top:675.19px;color:#000;font-size:11px;line-height:14px;letter-spacing:-0.3px;left:35.5px;transform:scaleY(1.1);transform-origin:0 10.81px;-webkit-text-stroke:0.1px #000;">PI Errors</span>
<span class="t" style="top:690.69px;color:#000;font-size:11px;line-height:14px;left:22.3px;transform:scaleY(1.1);transform-origin:0 10.81px;-webkit-text-stroke:0.1px #000;">Среднее:</span>
<span class="t" style="top:690.69px;color:#000080;font-size:11px;line-height:14px;right:881px;text-align:right;transform:scaleY(1.1);transform-origin:0 10.81px;-webkit-text-stroke:0.1px #000080;">1636.72</span>
<span class="t" style="top:705.69px;color:#000;font-size:11px;line-height:14px;left:22.3px;transform:scaleY(1.1);transform-origin:0 10.81px;-webkit-text-stroke:0.1px #000;">Максим.:</span>
<span class="t" style="top:705.69px;color:#000080;font-size:11px;line-height:14px;right:881px;text-align:right;transform:scaleY(1.1);transform-origin:0 10.81px;-webkit-text-stroke:0.1px #000080;">2708</span>
<span class="t" style="top:720.69px;color:#000;font-size:11px;line-height:14px;left:22.3px;transform:scaleY(1.1);transform-origin:0 10.81px;-webkit-text-stroke:0.1px #000;">Итого:</span>
<span class="t" style="top:720.69px;color:#000080;font-size:11px;line-height:14px;right:881px;text-align:right;transform:scaleY(1.1);transform-origin:0 10.81px;-webkit-text-stroke:0.1px #000080;">16210195</span>
<div class="fr" style="left:172px;top:681px;width:146px;height:57px;"></div>
<div style="left:179px;top:680px;width:64px;height:5px;background:#eef0f9;"></div>
<div style="left:182px;top:678px;width:8px;height:8px;background:#ffff00;border:1px solid #000;"></div>
<span class="t" style="top:675.19px;color:#000;font-size:11px;line-height:14px;letter-spacing:-0.3px;left:193.5px;transform:scaleY(1.1);transform-origin:0 10.81px;-webkit-text-stroke:0.1px #000;">PI Failures</span>
<span class="t" style="top:690.69px;color:#000;font-size:11px;line-height:14px;left:181.3px;transform:scaleY(1.1);transform-origin:0 10.81px;-webkit-text-stroke:0.1px #000;">Среднее:</span>
<span class="t" style="top:690.69px;color:#000080;font-size:11px;line-height:14px;right:723px;text-align:right;transform:scaleY(1.1);transform-origin:0 10.81px;-webkit-text-stroke:0.1px #000080;">35.43</span>
<span class="t" style="top:705.69px;color:#000;font-size:11px;line-height:14px;left:181.3px;transform:scaleY(1.1);transform-origin:0 10.81px;-webkit-text-stroke:0.1px #000;">Максим.:</span>
<span class="t" style="top:705.69px;color:#000080;font-size:11px;line-height:14px;right:723px;text-align:right;transform:scaleY(1.1);transform-origin:0 10.81px;-webkit-text-stroke:0.1px #000080;">219</span>
<span class="t" style="top:720.69px;color:#000;font-size:11px;line-height:14px;left:181.3px;transform:scaleY(1.1);transform-origin:0 10.81px;-webkit-text-stroke:0.1px #000;">Итого:</span>
<span class="t" style="top:720.69px;color:#000080;font-size:11px;line-height:14px;right:723px;text-align:right;transform:scaleY(1.1);transform-origin:0 10.81px;-webkit-text-stroke:0.1px #000080;">294316</span>
<div class="fr" style="left:331px;top:681px;width:147px;height:43px;"></div>
<div style="left:338px;top:680px;width:0px;height:5px;background:#eef0f9;"></div>
<div style="left:341px;top:678px;width:8px;height:8px;background:#ff00ff;border:1px solid #000;"></div>
<span class="t" style="top:675.19px;color:#000;font-size:11px;line-height:14px;letter-spacing:-0.3px;left:352.5px;transform:scaleY(1.1);transform-origin:0 10.81px;-webkit-text-stroke:0.1px #000;">Jitter</span>
<span class="t" style="top:690.69px;color:#000;font-size:11px;line-height:14px;left:340.3px;transform:scaleY(1.1);transform-origin:0 10.81px;-webkit-text-stroke:0.1px #000;">Среднее:</span>
<span class="t" style="top:690.69px;color:#000080;font-size:11px;line-height:14px;right:563px;text-align:right;transform:scaleY(1.1);transform-origin:0 10.81px;-webkit-text-stroke:0.1px #000080;">-</span>
<span class="t" style="top:705.69px;color:#000;font-size:11px;line-height:14px;left:340.3px;transform:scaleY(1.1);transform-origin:0 10.81px;-webkit-text-stroke:0.1px #000;">Максим.:</span>
<span class="t" style="top:705.69px;color:#000080;font-size:11px;line-height:14px;right:563px;text-align:right;transform:scaleY(1.1);transform-origin:0 10.81px;-webkit-text-stroke:0.1px #000080;">-</span>
<span class="t" style="top:725.19px;color:#000;font-size:11px;line-height:14px;letter-spacing:-0.25px;left:340.5px;transform:scaleY(1.1);transform-origin:0 10.81px;-webkit-text-stroke:0.1px #000;">Сбои PO:</span>
<span class="t" style="top:725.19px;color:#000080;font-size:11px;line-height:14px;right:563px;text-align:right;transform:scaleY(1.1);transform-origin:0 10.81px;-webkit-text-stroke:0.1px #000080;">-</span>
<div style="left:11px;top:740px;width:1014px;height:1px;background:#c4ccd8;"></div>
<div style="left:1024px;top:122px;width:1px;height:619px;background:#c4ccd8;"></div>
<div style="left:4px;top:742px;width:1024px;height:1px;background:#2f559c;"></div>
<div style="left:4px;top:743px;width:1024px;height:3px;background:linear-gradient(to bottom,#6aaae8,#86c2f4);"></div>
<div style="left:4px;top:743px;width:94px;height:3px;background:linear-gradient(to bottom,#bfe4bf,#78c278 60%,#6cba6c);border-radius:0 3px 0 0;"></div>
<div style="left:881px;top:742px;width:147px;height:1px;background:#56708c;"></div>
<div style="left:881px;top:743px;width:147px;height:3px;background:#f6f8fc;"></div>
</div>
</body></html>
